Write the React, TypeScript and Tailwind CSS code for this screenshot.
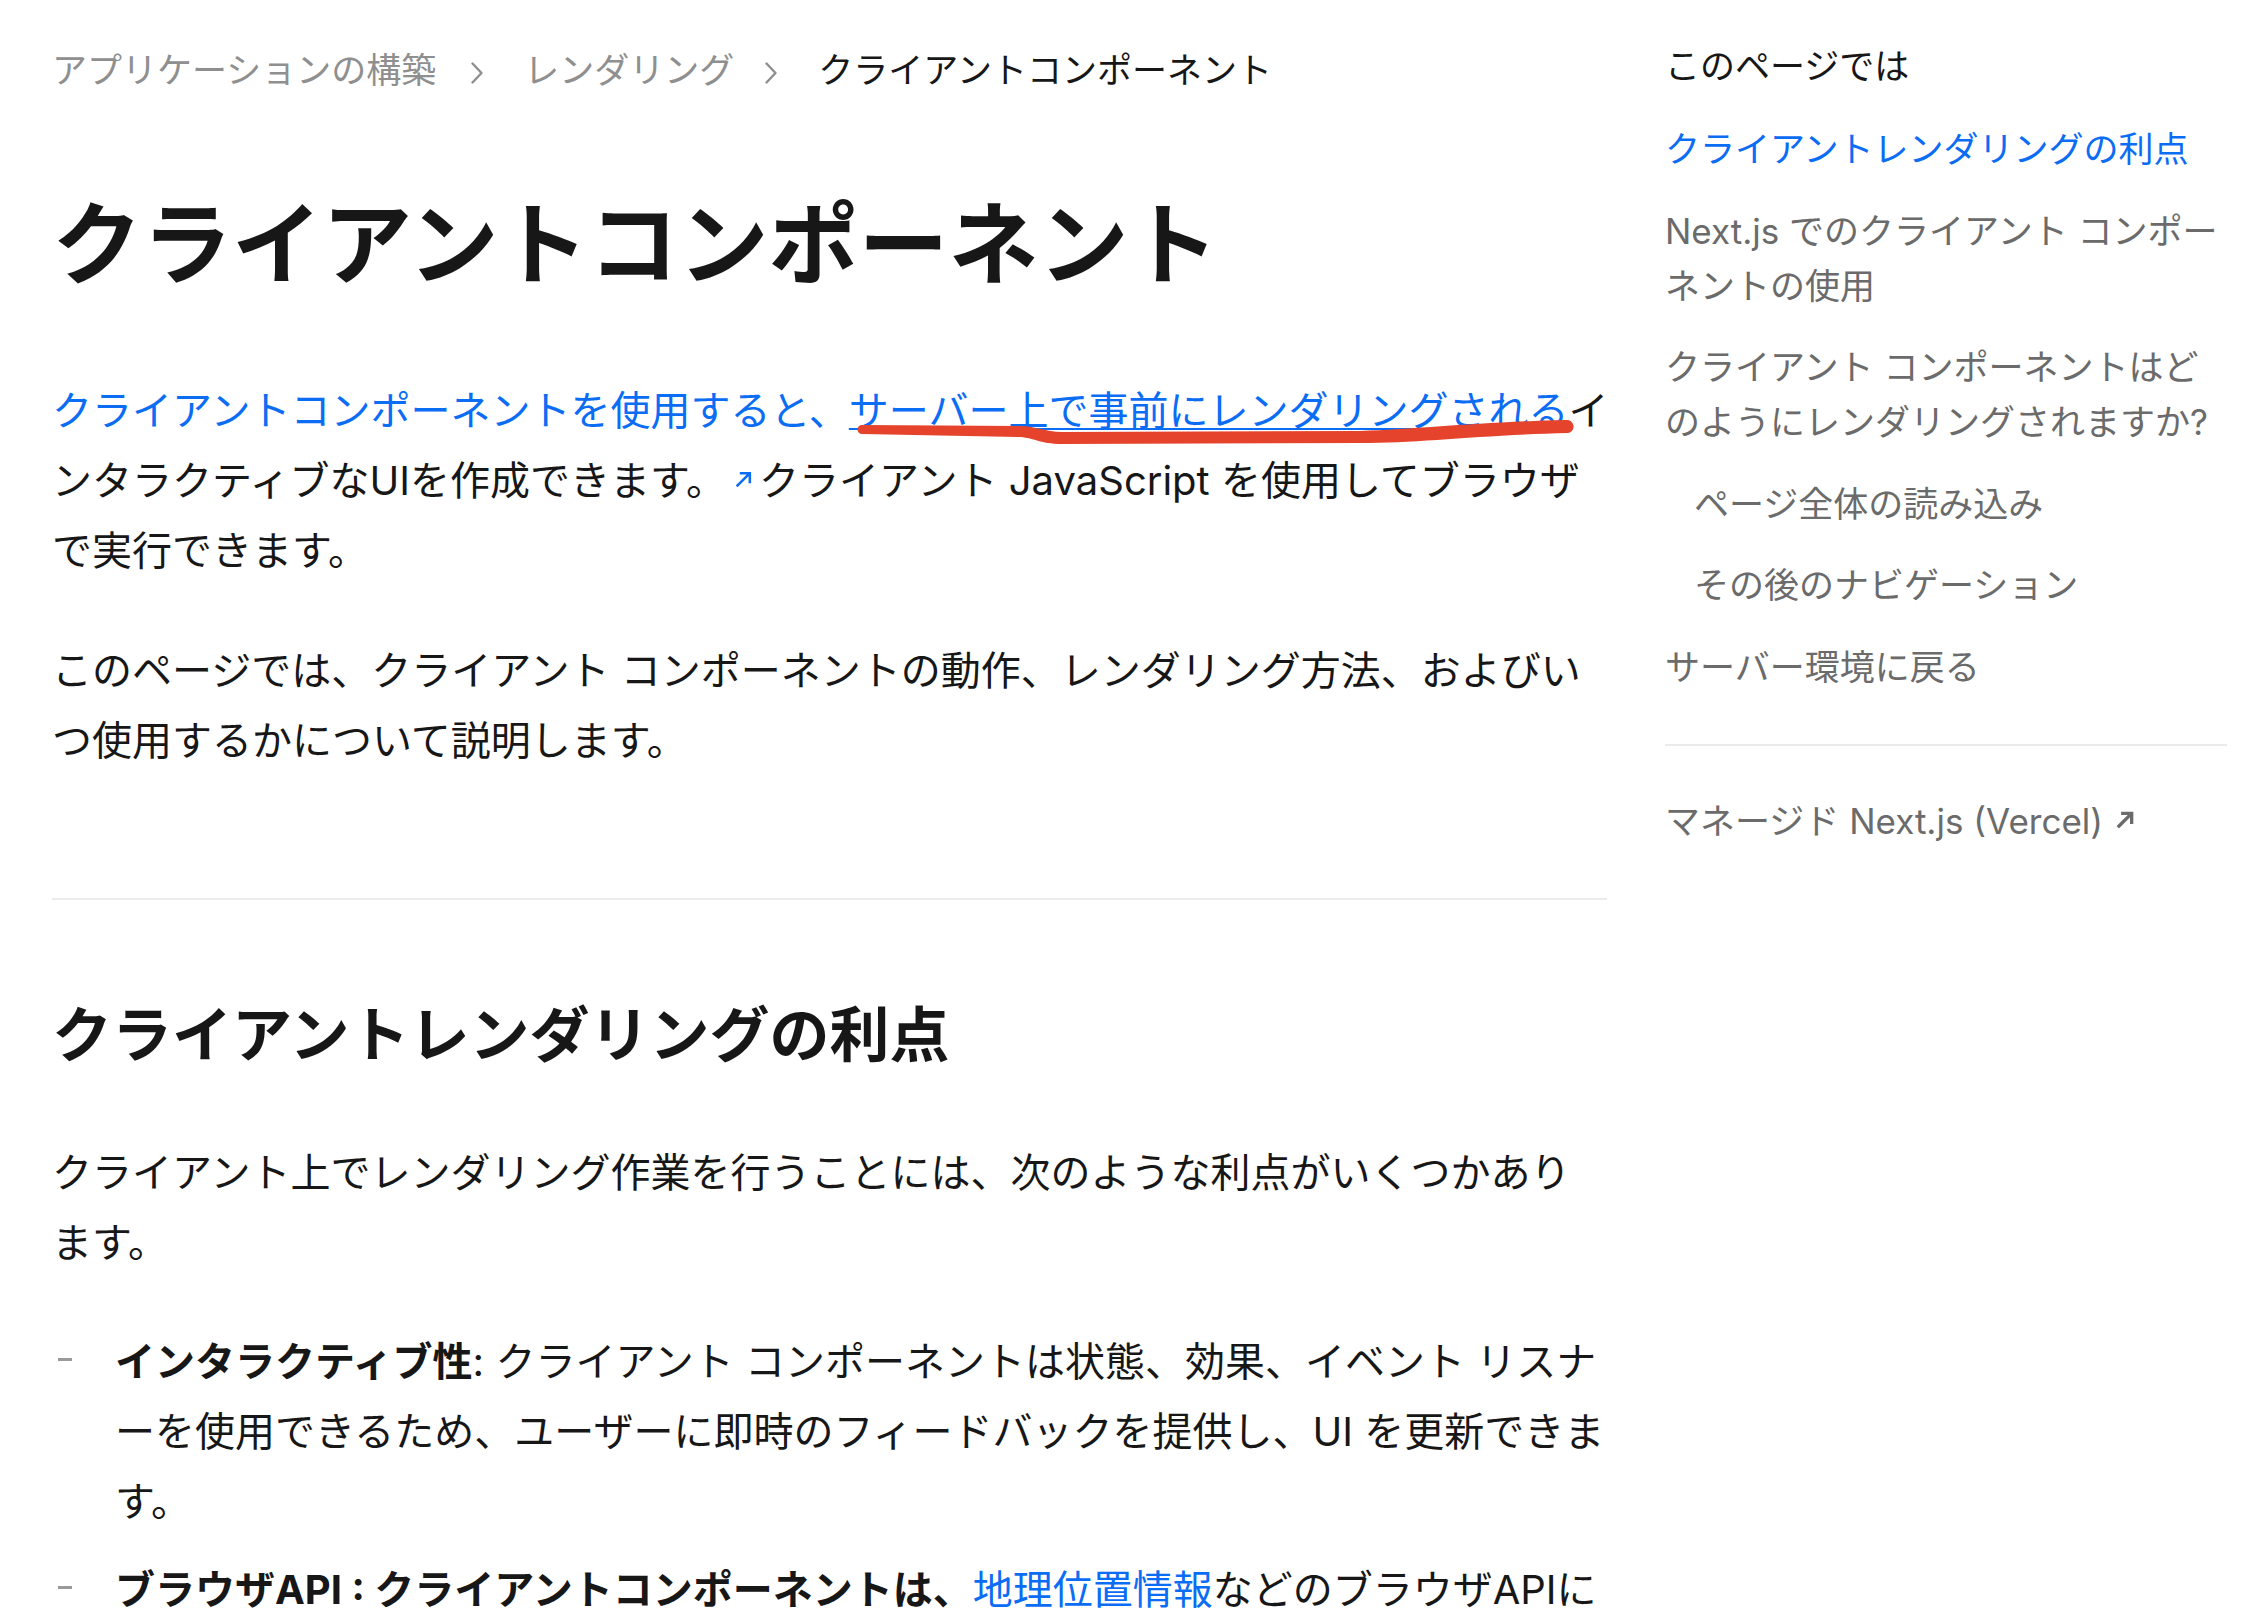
import React from "react";

function Chevron({ className = "" }: { className?: string }) {
  return (
    <svg width="14" height="24" viewBox="0 0 14 24" className={className} fill="none">
      <path d="M2.5 2.5 L11.5 12 L2.5 21.5" stroke="#8f8f8f" strokeWidth="2.4" strokeLinecap="round" strokeLinejoin="round" />
    </svg>
  );
}

function ExtArrow({ color, size, stroke, className = "" }: { color: string; size: number; stroke: number; className?: string }) {
  return (
    <svg width={size} height={size} viewBox="0 0 18 18" className={className} fill="none">
      <path d="M2.5 15.5 L15 3 M5.5 3 H15 V12.5" stroke={color} strokeWidth={stroke} strokeLinecap="butt" strokeLinejoin="miter" />
    </svg>
  );
}

export default function App() {
  return (
    <div className="relative flex w-[2265px] h-[1616px] overflow-hidden bg-white text-[#171717] font-['Inter','Noto_Sans_CJK_JP',sans-serif]">
      <main className="ml-[52px] w-[1563px] min-w-0 shrink-0">
        <nav className="mt-[44px] flex items-center h-[52px] text-[35px] leading-[52px] whitespace-nowrap">
          <span className="text-[#8f8f8f]">アプリケーションの構築</span>
          <Chevron className="ml-[34px] mr-[40px] mt-[6px]" />
          <span className="text-[#8f8f8f]">レンダリング</span>
          <Chevron className="ml-[30px] mr-[40px] mt-[6px]" />
          <span className="text-[#171717]">クライアントコンポーネント</span>
        </nav>

        <h1 className="mt-[95px] text-[90px] font-bold leading-[107px] whitespace-nowrap">
          クライアントコンポーネント
        </h1>

        <p className="mt-[78px] text-[40px] leading-[70px] whitespace-nowrap">
          <span className="text-[#0b6cf4]">クライアントコンポーネントを使用すると、</span>
          <span className="text-[#0b6cf4] underline decoration-[2px] underline-offset-[3px]">サーバー上で事前にレンダリングされる</span>
          イ
          <br />
          ンタラクティブなUIを作成できます。
          <ExtArrow color="#0b6cf4" size={19} stroke={2.4} className="inline-block ml-[8px] mr-[6px] mb-[9px]" />
          クライアント JavaScript を使用してブラウザ
          <br />
          で実行できます。
        </p>

        <p className="mt-[50px] text-[40px] leading-[70px] whitespace-nowrap">
          このページでは、クライアント コンポーネントの動作、レンダリング方法、およびい
          <br />
          つ使用するかについて説明します。
        </p>

        <hr className="mt-[122px] border-0 h-[2px] w-[1555px] bg-[#ebebeb]" />

        <h2 className="mt-[96px] text-[60px] font-bold leading-[78px] whitespace-nowrap">
          クライアントレンダリングの利点
        </h2>

        <p className="mt-[64px] text-[40px] leading-[70px] whitespace-nowrap">
          クライアント上でレンダリング作業を行うことには、次のような利点がいくつかあり
          <br />
          ます。
        </p>

        <ul className="mt-[49px] text-[40px] leading-[70px]">
          <li className="flex">
            <div className="w-[63px] shrink-0">
              <div className="ml-[6px] mt-[31px] w-[14px] h-[3px] bg-[#9a9a9a]" />
            </div>
            <div className="whitespace-nowrap">
              <strong className="font-bold">インタラクティブ性</strong>: クライアント コンポーネントは状態、効果、イベント リスナ
              <br />
              ーを使用できるため、ユーザーに即時のフィードバックを提供し、UI を更新できま
              <br />
              す。
            </div>
          </li>
          <li className="flex mt-[18px]">
            <div className="w-[63px] shrink-0">
              <div className="ml-[6px] mt-[31px] w-[14px] h-[3px] bg-[#9a9a9a]" />
            </div>
            <div className="whitespace-nowrap">
              <strong className="font-bold">ブラウザAPI : クライアントコンポーネントは、</strong>
              <span className="text-[#0b6cf4]">地理位置情報</span>などのブラウザAPIに
            </div>
          </li>
        </ul>
      </main>

      <aside className="ml-[50px] w-[562px] shrink-0 text-[35px] leading-[55px] whitespace-nowrap">
        <div className="mt-[39px] text-[#171717]">このページでは</div>
        <ul className="mt-[28px] flex flex-col gap-[26.5px] text-[#6b6b6b]">
          <li className="text-[#0b6cf4]">クライアントレンダリングの利点</li>
          <li>
            Next.js でのクライアント コンポー
            <br />
            ネントの使用
          </li>
          <li>
            クライアント コンポーネントはど
            <br />
            のようにレンダリングされますか?
          </li>
          <li className="pl-[29px]">ページ全体の読み込み</li>
          <li className="pl-[29px]">その後のナビゲーション</li>
          <li>サーバー環境に戻る</li>
        </ul>
        <hr className="mt-[49px] border-0 h-[2px] bg-[#ebebeb]" />
        <div className="mt-[48px] text-[#6b6b6b]">
          マネージド Next.js (Vercel)
          <ExtArrow color="#6b6b6b" size={20} stroke={3} className="inline-block ml-[12px] mb-[7px]" />
        </div>
      </aside>

      <svg className="absolute left-0 top-0 pointer-events-none" width="2265" height="1616" viewBox="0 0 2265 1616">
        <path
          d="M862,425 L1020,426 C1036,426 1045,432 1062,432 L1360,431 C1420,429 1480,422 1566,420 A6.5,6.5 0 0 1 1568,433 C1480,435 1420,443 1360,443 L1062,444 C1040,444 1032,437 1018,437 L862,434 A4.5,4.5 0 0 1 862,425 Z"
          fill="#e5432c"
        />
      </svg>
    </div>
  );
}
